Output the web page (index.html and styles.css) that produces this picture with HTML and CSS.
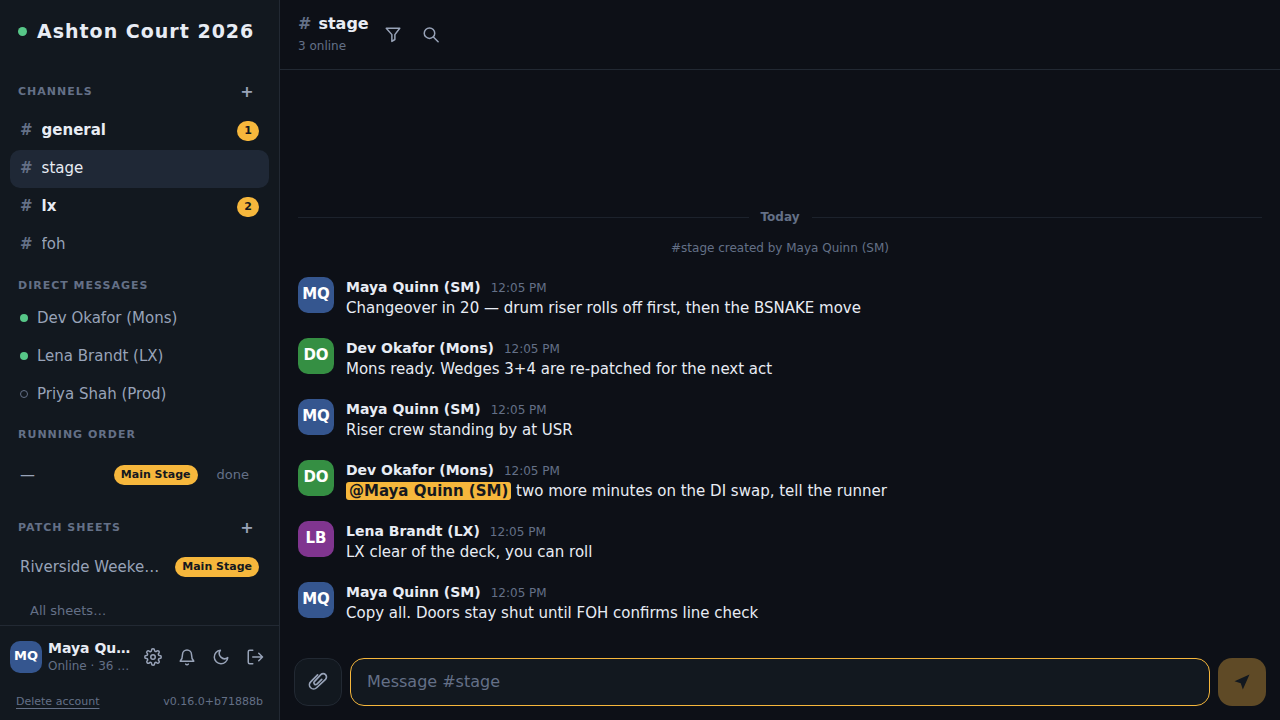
FILE: index.html
```html
<!DOCTYPE html>
<html lang="en">
<head>
    <meta charset="UTF-8">
    <meta name="viewport" content="width=device-width, initial-scale=1">
    <title>Ashton Court 2026</title>
    <link rel="stylesheet" href="styles.css">
</head>
<body>
<div class="app">
    <aside class="sidebar">
        <div class="brand">
            <span class="dot dot-lg"></span>
            <h1>Ashton Court 2026</h1>
        </div>

        <nav class="side-scroll">
            <div class="section-head">
                <h2>Channels</h2>
                <button class="add" type="button" aria-label="New channel">+</button>
            </div>
            <a class="item unread" href="#general"><span class="hash">#</span><span class="label">general</span><span class="badge">1</span></a>
            <a class="item active" href="#stage"><span class="hash">#</span><span class="label">stage</span></a>
            <a class="item unread" href="#lx"><span class="hash">#</span><span class="label">lx</span><span class="badge">2</span></a>
            <a class="item" href="#foh"><span class="hash">#</span><span class="label">foh</span></a>

            <div class="section-head plain">
                <h2>Direct messages</h2>
            </div>
            <a class="item" href="#dev"><span class="dot"></span><span class="label">Dev Okafor (Mons)</span></a>
            <a class="item" href="#lena"><span class="dot"></span><span class="label">Lena Brandt (LX)</span></a>
            <a class="item" href="#priya"><span class="dot off"></span><span class="label">Priya Shah (Prod)</span></a>

            <div class="section-head plain">
                <h2>Running order</h2>
            </div>
            <div class="item order">
                <span class="label">—</span>
                <span class="badge">Main Stage</span>
                <button class="done" type="button">done</button>
            </div>

            <div class="section-head">
                <h2>Patch sheets</h2>
                <button class="add" type="button" aria-label="New patch sheet">+</button>
            </div>
            <a class="item" href="#sheet"><span class="label">Riverside Weekender</span><span class="badge">Main Stage</span></a>
            <a class="all-sheets" href="#sheets">All sheets…</a>
        </nav>

        <footer class="me">
            <div class="me-row">
                <span class="avatar small blue">MQ</span>
                <div class="me-text">
                    <div class="me-name">Maya Quinn (SM)</div>
                    <div class="me-status">Online · 36 queued</div>
                </div>
                <button class="icon-btn" type="button" aria-label="Settings">
                    <svg viewBox="0 0 24 24"><circle cx="12" cy="12" r="3"/><path d="M19.4 15a1.65 1.65 0 0 0 .33 1.82l.06.06a2 2 0 1 1-2.83 2.83l-.06-.06a1.65 1.65 0 0 0-2.8 1.17V21a2 2 0 0 1-4 0v-.09a1.65 1.65 0 0 0-2.9-1.17l-.06.06a2 2 0 1 1-2.83-2.83l.06-.06A1.65 1.65 0 0 0 3.1 14H3a2 2 0 0 1 0-4h.09a1.65 1.65 0 0 0 1.17-2.9l-.06-.06a2 2 0 1 1 2.83-2.83l.06.06A1.65 1.65 0 0 0 10 3.1V3a2 2 0 0 1 4 0v.09a1.65 1.65 0 0 0 2.82 1.17l.06-.06a2 2 0 1 1 2.83 2.83l-.06.06A1.65 1.65 0 0 0 20.9 10H21a2 2 0 0 1 0 4h-.09a1.65 1.65 0 0 0-1.51 1z"/></svg>
                </button>
                <button class="icon-btn" type="button" aria-label="Notifications">
                    <svg viewBox="0 0 24 24"><path d="M18 8.5a6 6 0 0 0-12 0c0 6-1.5 7.5-3 9h18c-1.5-1.5-3-3-3-9z"/><path d="M10.3 21.5a2 2 0 0 0 3.4 0"/></svg>
                </button>
                <button class="icon-btn" type="button" aria-label="Dark mode">
                    <svg viewBox="0 0 24 24"><path d="M21 12.8A9 9 0 1 1 11.2 3 7 7 0 0 0 21 12.8z"/></svg>
                </button>
                <button class="icon-btn" type="button" aria-label="Sign out">
                    <svg viewBox="0 0 24 24"><path d="M9 21H5a2 2 0 0 1-2-2V5a2 2 0 0 1 2-2h4M17 17l5-5-5-5M22 12H9"/></svg>
                </button>
            </div>
            <div class="me-foot">
                <a href="#delete">Delete account</a>
                <span>v0.16.0+b71888b</span>
            </div>
        </footer>
    </aside>

    <main class="chat">
        <header class="chat-head">
            <div class="chat-title">
                <h2><span class="hash">#</span>stage</h2>
                <p>3 online</p>
            </div>
            <button class="icon-btn" type="button" aria-label="Filter">
                <svg viewBox="0 0 24 24"><path d="M3 3h18l-6.5 8.5V18l-4 2.5v-9z"/></svg>
            </button>
            <button class="icon-btn" type="button" aria-label="Search">
                <svg viewBox="0 0 24 24"><circle cx="10" cy="9.5" r="7"/><path d="M15.5 15l6 6"/></svg>
            </button>
        </header>

        <section class="messages">
            <div class="day"><span>Today</span></div>
            <p class="system">#stage created by Maya Quinn (SM)</p>

            <article class="msg">
                <span class="avatar blue">MQ</span>
                <div>
                    <div class="msg-meta"><b>Maya Quinn (SM)</b><time>12:05 PM</time></div>
                    <p>Changeover in 20 — drum riser rolls off first, then the BSNAKE move</p>
                </div>
            </article>
            <article class="msg">
                <span class="avatar green">DO</span>
                <div>
                    <div class="msg-meta"><b>Dev Okafor (Mons)</b><time>12:05 PM</time></div>
                    <p>Mons ready. Wedges 3+4 are re-patched for the next act</p>
                </div>
            </article>
            <article class="msg">
                <span class="avatar blue">MQ</span>
                <div>
                    <div class="msg-meta"><b>Maya Quinn (SM)</b><time>12:05 PM</time></div>
                    <p>Riser crew standing by at USR</p>
                </div>
            </article>
            <article class="msg">
                <span class="avatar green">DO</span>
                <div>
                    <div class="msg-meta"><b>Dev Okafor (Mons)</b><time>12:05 PM</time></div>
                    <p><mark>@Maya Quinn (SM)</mark> two more minutes on the DI swap, tell the runner</p>
                </div>
            </article>
            <article class="msg">
                <span class="avatar purple">LB</span>
                <div>
                    <div class="msg-meta"><b>Lena Brandt (LX)</b><time>12:05 PM</time></div>
                    <p>LX clear of the deck, you can roll</p>
                </div>
            </article>
            <article class="msg">
                <span class="avatar blue">MQ</span>
                <div>
                    <div class="msg-meta"><b>Maya Quinn (SM)</b><time>12:05 PM</time></div>
                    <p>Copy all. Doors stay shut until FOH confirms line check</p>
                </div>
            </article>
        </section>

        <form class="composer">
            <button class="attach" type="button" aria-label="Attach file">
                <svg viewBox="0 0 24 24"><path d="M11.5 3.5L3.2 11.8a5 5 0 0 0 7.100 7.100L21 8.800a3.900 3.900 0 0 0-5.600-5.600L7.600 11.500a2.200 2.200 0 0 0 3.100 3.100L16.500 8.800"/></svg>
            </button>
            <input type="text" placeholder="Message #stage" aria-label="Message #stage">
            <button class="send" type="submit" aria-label="Send">
                <svg viewBox="0 0 24 24"><path d="M21 3L3 11l7.5 2.5L13 21z"/></svg>
            </button>
        </form>
    </main>
</div>
</body>
</html>
```

FILE: styles.css
```css
* {
    box-sizing: border-box;
    margin: 0;
    padding: 0;
}

:root {
    --bg: #0d1017;
    --panel: #12181f;
    --line: #222933;
    --text: #e8ecf4;
    --soft: #98a3b8;
    --muted: #647087;
    --amber: #f6b73c;
    --green: #57c788;
}

body {
    background: var(--bg);
    color: var(--text);
    font: 15px/20px "DejaVu Sans", sans-serif;
}

a {
    color: inherit;
    text-decoration: none;
}

button,
input {
    font: inherit;
    color: inherit;
    background: none;
    border: none;
}

button {
    cursor: pointer;
}

svg {
    fill: none;
    stroke: currentColor;
    stroke-width: 2;
    stroke-linecap: round;
    stroke-linejoin: round;
}

.app {
    display: flex;
    height: 100vh;
}

/* sidebar */
.sidebar {
    display: flex;
    flex-direction: column;
    flex: 0 0 280px;
    min-width: 0;
    background: var(--panel);
    border-right: 1px solid var(--line);
}

.brand {
    display: flex;
    align-items: center;
    gap: 10px;
    height: 62px;
    padding: 0 18px;
}

.brand h1 {
    font-size: 19px;
    letter-spacing: 1px;
    white-space: nowrap;
}

.dot {
    flex: none;
    width: 8px;
    height: 8px;
    border-radius: 50%;
    background: var(--green);
}

.dot-lg {
    width: 9px;
    height: 9px;
}

.dot.off {
    background: none;
    border: 1px solid var(--muted);
}

.side-scroll {
    flex: 1;
    min-height: 0;
    padding: 10px 10px 0;
    overflow: hidden;
}

.section-head {
    display: flex;
    align-items: center;
    justify-content: space-between;
    height: 40px;
    padding: 0 8px;
}

.section-head.plain {
    height: 35px;
    padding-top: 8px;
}

.section-head h2 {
    color: var(--muted);
    font-size: 11px;
    letter-spacing: 1px;
    text-transform: uppercase;
}

.add {
    width: 28px;
    height: 28px;
    color: var(--soft);
    font-size: 16px;
    font-weight: bold;
}

.item {
    display: flex;
    align-items: center;
    gap: 9px;
    height: 38px;
    padding: 0 10px;
    border-radius: 10px;
    color: var(--soft);
}

.item .label {
    flex: 1;
    overflow: hidden;
    text-overflow: ellipsis;
    white-space: nowrap;
}

.item.unread .label {
    color: var(--text);
    font-weight: bold;
}

.item.active {
    background: #1f2836;
    color: var(--text);
}

.hash {
    color: var(--muted);
}

.item .hash {
    font-weight: bold;
}

.item .hash,
.item .hash + .label {
    padding-bottom: 2px;
}

.badge {
    min-width: 22px;
    padding: 0 7px;
    border-radius: 10px;
    background: var(--amber);
    color: #14181f;
    font-size: 11px;
    font-weight: bold;
    text-align: center;
}

.item.order {
    height: 54px;
    margin-bottom: 6px;
}

.done {
    padding: 0 10px;
    color: var(--muted);
    font-size: 13px;
}

.all-sheets {
    display: block;
    padding: 15px 20px;
    color: var(--muted);
    font-size: 13px;
}

.me {
    padding: 13px 10px 8px;
    border-top: 1px solid var(--line);
}

.me-row {
    display: flex;
    align-items: center;
    margin-right: -3px;
}

.me-text {
    flex: 1;
    min-width: 0;
    margin: 0 2px 0 6px;
}

.me-name,
.me-status {
    overflow: hidden;
    text-overflow: ellipsis;
    white-space: nowrap;
}

.me-name {
    font-size: 14px;
    font-weight: bold;
    line-height: 18px;
}

.me-status {
    color: var(--muted);
    font-size: 12px;
    line-height: 18px;
}

.me-foot {
    display: flex;
    justify-content: space-between;
    padding: 17px 6px 0;
    color: var(--muted);
    font-size: 11px;
}

.me-foot a {
    text-decoration: underline;
    text-underline-offset: 3px;
}

.icon-btn {
    display: grid;
    place-items: center;
    width: 34px;
    height: 34px;
    color: var(--soft);
}

.icon-btn svg {
    width: 18px;
    height: 18px;
}

.avatar {
    display: grid;
    place-items: center;
    flex: none;
    width: 36px;
    height: 36px;
    padding-bottom: 2px;
    border-radius: 10px;
    color: #fff;
    font-weight: bold;
}

.avatar.small {
    width: 32px;
    height: 32px;
    font-size: 13px;
}

.blue {
    background: #35568f;
}

.green {
    background: #358f43;
}

.purple {
    background: #80358f;
}

/* chat */
.chat {
    display: flex;
    flex-direction: column;
    flex: 1;
    min-width: 0;
}

.chat-head {
    display: flex;
    align-items: center;
    gap: 4px;
    height: 70px;
    padding: 0 18px;
    border-bottom: 1px solid var(--line);
}

.chat-title {
    margin-right: 3px;
}

.chat-title h2 {
    display: flex;
    gap: 7px;
    font-size: 16px;
    line-height: 22px;
}

.chat-title p {
    color: var(--muted);
    font-size: 12px;
    line-height: 22px;
}

.messages {
    display: flex;
    flex-direction: column;
    justify-content: flex-end;
    flex: 1;
    gap: 19px;
    min-height: 0;
    padding: 0 18px 34px;
    overflow: hidden;
}

.day {
    display: flex;
    align-items: center;
    gap: 12px;
    margin-bottom: -8px;
    color: var(--muted);
    font-size: 12px;
    font-weight: bold;
}

.day::before,
.day::after {
    content: "";
    flex: 1;
    border-top: 1px solid #1c222c;
}

.system {
    color: var(--muted);
    font-size: 12px;
    text-align: center;
}

.msg {
    display: flex;
    gap: 12px;
}

.msg-meta {
    display: flex;
    align-items: baseline;
    gap: 10px;
    font-size: 14px;
}

.msg-meta time {
    color: var(--muted);
    font-size: 12px;
}

.msg p {
    line-height: 21px;
}

mark {
    padding: 0 3px;
    border-radius: 3px;
    background: var(--amber);
    color: #14181f;
    font-weight: bold;
}

.composer {
    display: flex;
    gap: 8px;
    padding: 0 14px 14px;
}

.composer button {
    display: grid;
    place-items: center;
    flex: none;
    width: 48px;
    height: 48px;
    border-radius: 14px;
}

.composer svg {
    width: 20px;
    height: 20px;
}

.composer input {
    flex: 1;
    min-width: 0;
    padding: 0 16px;
    border: 1px solid var(--amber);
    border-radius: 14px;
    background: var(--panel);
    font-size: 16px;
    outline: none;
}

.composer input::placeholder {
    color: var(--muted);
}

.composer .attach {
    border: 1px solid var(--line);
    background: var(--panel);
    color: var(--soft);
}

.composer .send {
    background: #5f4a26;
    color: #12181f;
}

.send svg {
    fill: currentColor;
    stroke: none;
}
```
